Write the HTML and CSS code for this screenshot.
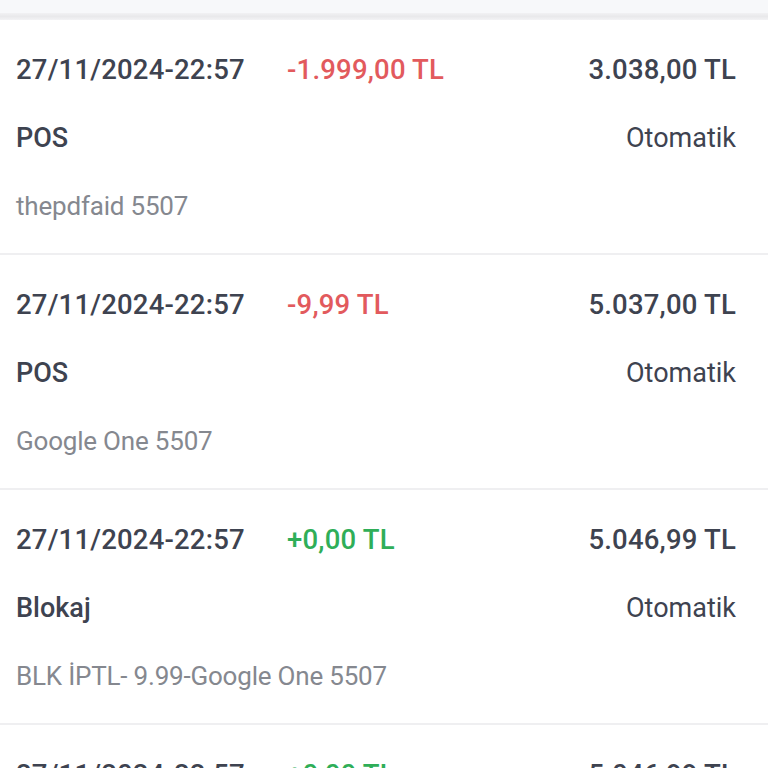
FILE: index.html
```html
<!DOCTYPE html>
<html>
<head>
    <meta charset="utf-8">
    <title>Hesap Hareketleri</title>
    <link rel="stylesheet" href="styles.css">
</head>
<body>
<div class="topbar"></div>
<div class="topshade"></div>
<ul class="txlist">
    <li class="tx">
        <div class="tx-head">
            <span class="tx-date">27/11/2024-22:57</span>
            <span class="tx-amount minus">-1.999,00 TL</span>
            <span class="tx-balance">3.038,00 TL</span>
        </div>
        <div class="tx-type">
            <span class="tx-kind">POS</span>
            <span class="tx-mode">Otomatik</span>
        </div>
        <div class="tx-desc">thepdfaid 5507</div>
    </li>
    <li class="tx">
        <div class="tx-head">
            <span class="tx-date">27/11/2024-22:57</span>
            <span class="tx-amount minus">-9,99 TL</span>
            <span class="tx-balance">5.037,00 TL</span>
        </div>
        <div class="tx-type">
            <span class="tx-kind">POS</span>
            <span class="tx-mode">Otomatik</span>
        </div>
        <div class="tx-desc">Google One 5507</div>
    </li>
    <li class="tx">
        <div class="tx-head">
            <span class="tx-date">27/11/2024-22:57</span>
            <span class="tx-amount plus">+0,00 TL</span>
            <span class="tx-balance">5.046,99 TL</span>
        </div>
        <div class="tx-type">
            <span class="tx-kind">Blokaj</span>
            <span class="tx-mode">Otomatik</span>
        </div>
        <div class="tx-desc">BLK İPTL- 9.99-Google One 5507</div>
    </li>
    <li class="tx">
        <div class="tx-head">
            <span class="tx-date">27/11/2024-22:57</span>
            <span class="tx-amount plus">+0,00 TL</span>
            <span class="tx-balance">5.046,99 TL</span>
        </div>
        <div class="tx-type">
            <span class="tx-kind">Blokaj</span>
            <span class="tx-mode">Otomatik</span>
        </div>
        <div class="tx-desc">Google One 5507</div>
    </li>
</ul>
</body>
</html>
```

FILE: styles.css
```css
html, body {
    margin: 0;
    padding: 0;
    background: #fff;
    overflow: hidden;
}

body {
    font-family: Roboto, "Noto Sans", sans-serif;
    color: #3e4350;
}

.topbar {
    height: 13px;
    background: #f7f8fa;
}

.topshade {
    height: 7px;
    background: linear-gradient(#f1f1f3, #e9e9eb 50%, #f3f3f5);
}

.txlist {
    list-style: none;
    margin: 0;
    padding: 0;
}

.tx {
    display: flex;
    flex-direction: column;
    gap: 28px;
    padding: 30px 32px 27px 16px;
    border-bottom: 2px solid #efeff1;
    font-size: 27px;
}

.tx-head, .tx-type, .tx-desc {
    height: 40px;
    line-height: 40px;
    white-space: nowrap;
}

.tx-head {
    display: grid;
    grid-template-columns: 271px 1fr auto;
    font-size: 27.5px;
    font-weight: 500;
    letter-spacing: 0.2px;
}

.tx-amount.minus {
    color: #e25a5d;
}

.tx-amount.plus {
    color: #2fae58;
}

.tx-type {
    display: flex;
    justify-content: space-between;
}

.tx-kind {
    font-weight: 500;
}

.tx-desc {
    font-size: 26px;
    letter-spacing: -0.2px;
    color: #85888f;
}
```
